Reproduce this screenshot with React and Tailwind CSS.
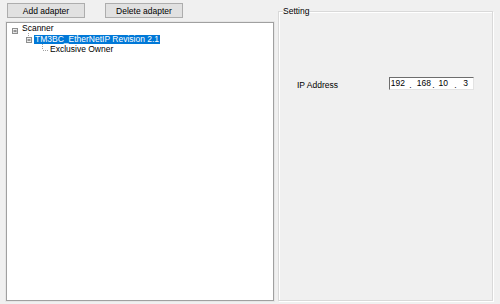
import React from "react";

function Expander() {
  return (
    <svg width="6" height="6" viewBox="0 0 6 6" className="block">
      <defs>
        <linearGradient id="eg" x1="0" y1="0" x2="1" y2="1">
          <stop offset="0" stopColor="#ffffff" />
          <stop offset="1" stopColor="#d4d4d4" />
        </linearGradient>
      </defs>
      <rect x="0.5" y="0.5" width="5" height="5" fill="url(#eg)" stroke="#8e8f8f" />
      <line x1="1.5" y1="3" x2="4.5" y2="3" stroke="#3c3c3c" />
    </svg>
  );
}

export default function App() {
  return (
    <div className="w-[500px] h-[304px] bg-[#f0f0f0] flex text-[8.5px] leading-[12px] text-black font-['Liberation_Sans',Arial,sans-serif]">
      <div className="flex flex-col pl-[6px] w-[274px]">
        <div className="flex pt-[3px] pl-[1px] gap-[20px] h-[22px]">
          <button className="w-[78px] h-[15px] bg-[#e1e1e1] border border-[#adadad] flex items-center justify-center leading-[12px]">
            Add adapter
          </button>
          <button className="w-[78px] h-[15px] bg-[#e1e1e1] border border-[#adadad] flex items-center justify-center leading-[12px]">
            Delete adapter
          </button>
        </div>
        <div className="w-[268px] h-[279px] bg-white border border-[#a0a0a0] shadow-[0_0_0_1px_#e6e6e6]">
          <div className="flex h-[11px] pl-[5px]">
            <div className="w-[10px] pt-[5px]">
              <Expander />
            </div>
            <span className="leading-[11px]">Scanner</span>
          </div>
          <div className="flex h-[10px] pl-[17px]">
            <svg width="10" height="10" viewBox="0 0 10 10" className="block -mt-[1px]">
              <line x1="4.5" y1="0" x2="4.5" y2="4" stroke="#a0a0a0" strokeDasharray="1 1" />
              <rect x="2.5" y="4.5" width="5" height="5" fill="#eeeeee" stroke="#8e8f8f" />
              <line x1="3.5" y1="7" x2="6.5" y2="7" stroke="#3c3c3c" />
            </svg>
            <span className="mt-[1px] h-[9px] bg-[#0078d7] text-white leading-[9px] px-[1px] whitespace-nowrap">
              TM3BC_EtherNetIP Revision 2.1
            </span>
          </div>
          <div className="flex h-[10px] pl-[33px]">
            <svg width="10" height="10" viewBox="0 0 10 10" className="block">
              <line x1="2.5" y1="0" x2="2.5" y2="6" stroke="#a0a0a0" strokeDasharray="1 1" />
              <line x1="3" y1="6.5" x2="9" y2="6.5" stroke="#a0a0a0" strokeDasharray="1 1" />
            </svg>
            <span className="leading-[11px]">Exclusive Owner</span>
          </div>
        </div>
      </div>
      <fieldset className="ml-[4px] mt-[5px] w-[215px] h-[296px] border border-[#d9d9d9] shadow-[1px_1px_0_#ffffff,inset_1px_1px_0_#ffffff] px-[4px]">
        <legend className="leading-[12px]">Setting</legend>
        <div className="flex items-center mt-[58px] pl-[14px]">
          <span className="w-[92px] pt-[4px]">IP Address</span>
          <div className="w-[85px] h-[13px] bg-white border border-t-[#6d6d6d] border-l-[#6d6d6d] border-r-[#e3e3e3] border-b-[#e3e3e3] flex items-center leading-[11px]">
            <span className="w-[15px] text-right">192</span>
            <span className="w-[11px] text-center translate-y-[2px]">.</span>
            <span className="w-[15px] text-right">168</span>
            <span className="w-[5px] text-center translate-y-[2px]">.</span>
            <span className="w-[12px] text-right">10</span>
            <span className="w-[15px] text-center translate-y-[2px]">.</span>
            <span className="w-[5px] text-right">3</span>
          </div>
        </div>
      </fieldset>
    </div>
  );
}
